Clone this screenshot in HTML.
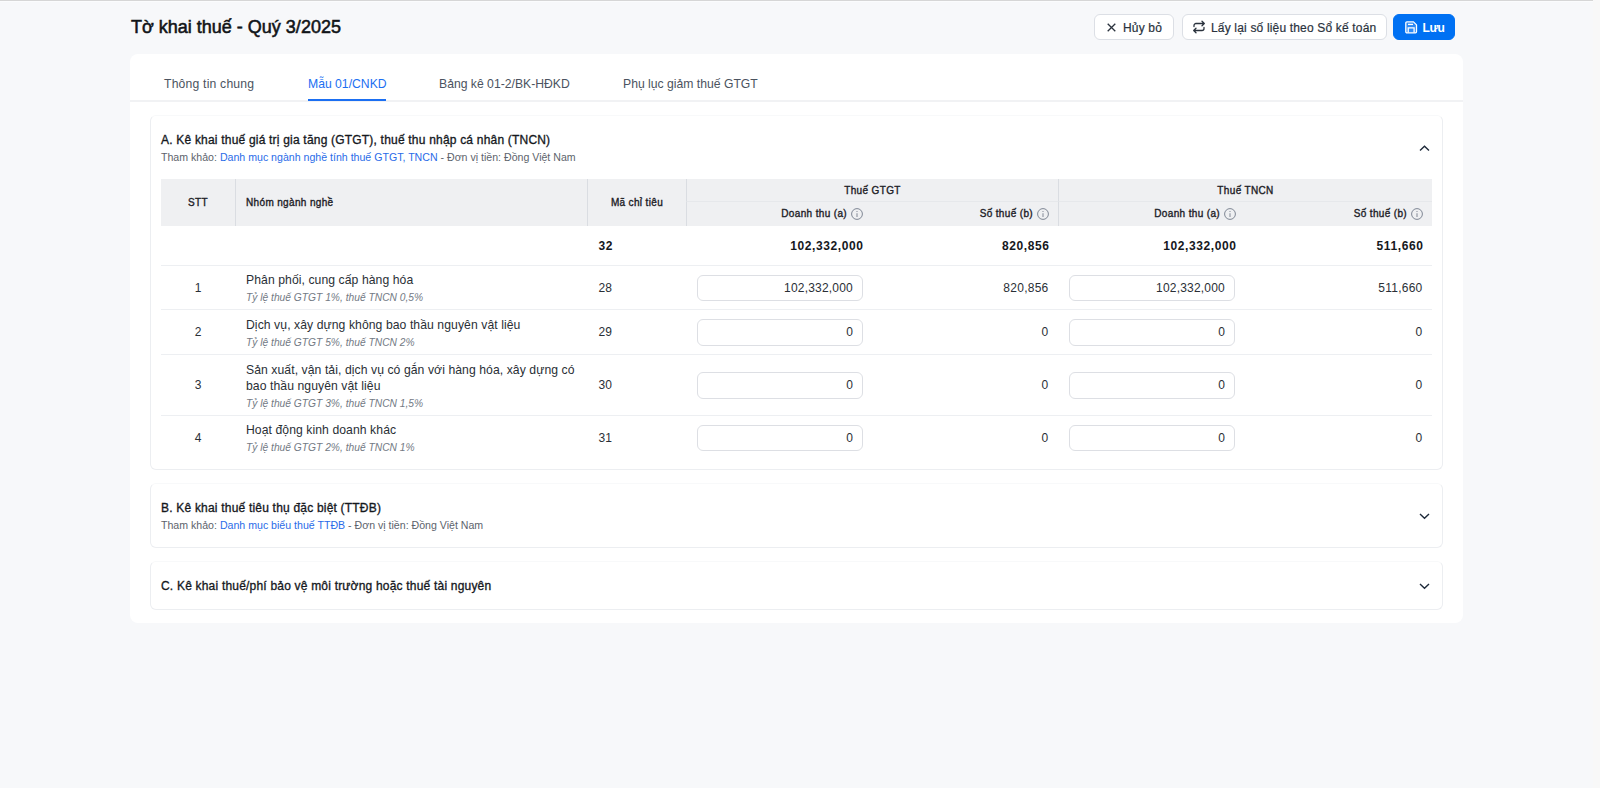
<!DOCTYPE html>
<html><head><meta charset="utf-8">
<style>
*{box-sizing:border-box;margin:0;padding:0}
html,body{width:1600px;height:788px;overflow:hidden}
body{background:#f7f8fa;font-family:"Liberation Sans",sans-serif;color:#1f2329;position:relative}
.topline{position:absolute;left:0;top:0;width:1593px;height:1px;background:#d6d6d6;box-shadow:0 1px 0 #fbfcfd}
.rstrip{position:absolute;left:1593px;top:0;width:7px;height:788px;background:#f8f8f8}
.title{position:absolute;left:131px;top:16px;font-size:18px;font-weight:normal;-webkit-text-stroke:0.55px currentColor;color:#111418;line-height:22px;white-space:nowrap}
.btn{position:absolute;top:14px;height:26px;border:1px solid #dcdfe5;border-radius:6px;background:#fff;font-size:12px;color:#2a323d;white-space:nowrap;line-height:24px}
.btn span{position:absolute;top:1px;letter-spacing:0.17px;-webkit-text-stroke:0.2px currentColor}
.btn svg{position:absolute}
.blue{background:#0071f3;border-color:#0071f3;color:#fff;font-weight:bold}
.card{position:absolute;left:130px;top:54px;width:1333px;height:569px;background:#fff;border-radius:8px}
.tabs{position:absolute;left:0;top:0;width:1333px;height:48px;border-bottom:2px solid #f1f2f4}
.tab{position:absolute;top:22px;font-size:12.2px;color:#4b5360;line-height:16px;white-space:nowrap}
.tab.act{color:#1b6ff2}
.uline{position:absolute;left:178px;top:45px;width:78px;height:2px;background:#1b6ff2}
.sec{position:absolute;left:20px;width:1293px;background:#fff;border:1px solid #eceef1;border-top-color:#f8f9fa;border-radius:6px}
.sh{position:absolute;left:10px;top:16px;white-space:nowrap}
.st{font-size:12px;font-weight:normal;-webkit-text-stroke:0.32px currentColor;letter-spacing:0.2px;color:#15181d;line-height:16px}
.ss{font-size:10.6px;color:#5d636c;line-height:14px;margin-top:2px}
.ss a{color:#2a6be8;text-decoration:none}
.chev{position:absolute;left:1268px}
table{position:absolute;left:10px;top:63px;width:1271px;border-collapse:separate;border-spacing:0;table-layout:fixed}
th{background:#eff0f2;font-size:10px;font-weight:normal;-webkit-text-stroke:0.35px currentColor;letter-spacing:0.35px;color:#1c2026;height:24px;padding:0 10px;white-space:nowrap}
th.g{height:23px;border-bottom:1px solid #e6e8eb;padding-top:1px}
th.l{border-left:1px solid #dadde2}
td{font-size:12px;color:#2a2f36;padding:0 10px;border-bottom:1px solid #edeff2;white-space:nowrap}
td.r,th.r{text-align:right}
th.r{padding-right:9px}
.tot td{font-weight:bold;color:#15181d;height:40px;letter-spacing:0.6px;padding-top:1px}
.name{line-height:16px;font-size:12.2px;letter-spacing:0.07px;color:#2a2f36;white-space:normal}
td.nm{padding:3px 10px 0 11px}
td.mc{padding-left:11.5px}
.it{font-style:italic;font-size:10.25px;color:#737a84;line-height:16px;margin-top:2px}
.inp{height:26.5px;width:166px;border:1px solid #dddfe4;border-radius:6px;text-align:right;padding-right:10px;line-height:25px;letter-spacing:0.2px;padding-right:9px}
td.ic{padding:1px 9px 0 11px}
.tot td.r{padding-right:8.5px}
td.v{padding-right:9.5px;letter-spacing:0.25px}
.info{display:inline-block;vertical-align:middle;margin-left:4px;position:relative;top:0px}
</style></head><body>
<div class="topline"></div>
<div class="rstrip"></div>
<div class="title">Tờ khai thuế - Quý 3/2025</div>

<div class="btn" style="left:1094px;width:80px">
  <svg style="left:12px;top:8px" width="9" height="9" viewBox="0 0 9 9"><path d="M0.7 0.7L8.3 8.3M8.3 0.7L0.7 8.3" stroke="#2a323d" stroke-width="1.3" fill="none"/></svg>
  <span style="left:28px">Hủy bỏ</span>
</div>
<div class="btn" style="left:1182px;width:205px">
  <svg style="left:9px;top:5px" width="14" height="14" viewBox="0 0 14 14"><path d="M2 6.5V5.5a2 2 0 0 1 2-2h8M10 1.2L12.3 3.5L10 5.8M12 7.5v1a2 2 0 0 1-2 2H2M4 8.2L1.7 10.5L4 12.8" stroke="#2a323d" stroke-width="1.3" fill="none" stroke-linecap="round" stroke-linejoin="round"/></svg>
  <span style="left:28px">Lấy lại số liệu theo Sổ kế toán</span>
</div>
<div class="btn blue" style="left:1393px;width:62px">
  <svg style="left:11px;top:6px" width="13" height="13" viewBox="0 0 13 13"><path d="M1.9 0.9h6.6l3 3v6.9a1.1 1.1 0 0 1-1.1 1.1H1.9a1.1 1.1 0 0 1-1.1-1.1V2a1.1 1.1 0 0 1 1.1-1.1z" stroke="#fff" stroke-width="1.3" fill="rgba(255,255,255,0.18)" stroke-linejoin="round"/><path d="M3 3.4h5" stroke="#fff" stroke-width="1.3"/><path d="M3.2 11.5V6.9h5.9v4.6" stroke="#fff" stroke-width="1.3" fill="none"/></svg>
  <span style="left:28.5px;font-size:12px;letter-spacing:-0.45px;-webkit-text-stroke:0">Lưu</span>
</div>

<div class="card">
  <div class="tabs">
    <div class="tab" style="left:34px;letter-spacing:0.19px">Thông tin chung</div>
    <div class="tab act" style="left:178px">Mẫu 01/CNKD</div>
    <div class="tab" style="left:309px">Bảng kê 01-2/BK-HĐKD</div>
    <div class="tab" style="left:493px">Phụ lục giảm thuế GTGT</div>
    <div class="uline"></div>
  </div>

  <div class="sec" style="top:61px;height:355px">
    <div class="sh">
      <div class="st">A. Kê khai thuế giá trị gia tăng (GTGT), thuế thu nhập cá nhân (TNCN)</div>
      <div class="ss">Tham khảo: <a>Danh mục ngành nghề tính thuế GTGT, TNCN</a> - Đơn vị tiền: Đồng Việt Nam</div>
    </div>
    <svg class="chev" style="top:28.5px" width="11" height="7" viewBox="0 0 11 7"><path d="M1 5.4L5.5 1.2L10 5.4" stroke="#1e2a3a" stroke-width="1.4" fill="none"/></svg>
    <table>
      <colgroup><col style="width:74px"><col style="width:352px"><col style="width:99px"><col style="width:186px"><col style="width:186px"><col style="width:187px"><col style="width:187px"></colgroup>
      <tr><th rowspan="2" style="text-align:center">STT</th><th rowspan="2" class="l" style="text-align:left">Nhóm ngành nghề</th><th rowspan="2" class="l" style="text-align:center">Mã chỉ tiêu</th><th colspan="2" class="l g">Thuế GTGT</th><th colspan="2" class="l g">Thuế TNCN</th></tr>
      <tr><th class="r l">Doanh thu (a)<svg class="info" width="12" height="12" viewBox="0 0 12 12"><circle cx="6" cy="6" r="5.4" stroke="#7f8794" stroke-width="1" fill="none"/><path d="M6 5.3v3.7M6 3.1v1" stroke="#8c939e" stroke-width="1.1"/></svg></th><th class="r">Số thuế (b)<svg class="info" width="12" height="12" viewBox="0 0 12 12"><circle cx="6" cy="6" r="5.4" stroke="#7f8794" stroke-width="1" fill="none"/><path d="M6 5.3v3.7M6 3.1v1" stroke="#8c939e" stroke-width="1.1"/></svg></th><th class="r l">Doanh thu (a)<svg class="info" width="12" height="12" viewBox="0 0 12 12"><circle cx="6" cy="6" r="5.4" stroke="#7f8794" stroke-width="1" fill="none"/><path d="M6 5.3v3.7M6 3.1v1" stroke="#8c939e" stroke-width="1.1"/></svg></th><th class="r">Số thuế (b)<svg class="info" width="12" height="12" viewBox="0 0 12 12"><circle cx="6" cy="6" r="5.4" stroke="#7f8794" stroke-width="1" fill="none"/><path d="M6 5.3v3.7M6 3.1v1" stroke="#8c939e" stroke-width="1.1"/></svg></th></tr>
      <tr class="tot"><td></td><td></td><td class="mc">32</td><td class="r">102,332,000</td><td class="r">820,856</td><td class="r">102,332,000</td><td class="r">511,660</td></tr>
      <tr style="height:44px"><td style="text-align:center">1</td><td class="nm"><div class="name">Phân phối, cung cấp hàng hóa</div><div class="it">Tỷ lệ thuế GTGT 1%, thuế TNCN 0,5%</div></td><td class="mc">28</td><td class="ic"><div class="inp">102,332,000</div></td><td class="r v">820,856</td><td class="ic"><div class="inp">102,332,000</div></td><td class="r v">511,660</td></tr>
      <tr style="height:45px"><td style="text-align:center">2</td><td class="nm"><div class="name">Dịch vụ, xây dựng không bao thầu nguyên vật liệu</div><div class="it">Tỷ lệ thuế GTGT 5%, thuế TNCN 2%</div></td><td class="mc">29</td><td class="ic"><div class="inp">0</div></td><td class="r v">0</td><td class="ic"><div class="inp">0</div></td><td class="r v">0</td></tr>
      <tr style="height:61px"><td style="text-align:center">3</td><td class="nm"><div class="name">Sản xuất, vận tải, dịch vụ có gắn với hàng hóa, xây dựng có bao thầu nguyên vật liệu</div><div class="it">Tỷ lệ thuế GTGT 3%, thuế TNCN 1,5%</div></td><td class="mc">30</td><td class="ic"><div class="inp">0</div></td><td class="r v">0</td><td class="ic"><div class="inp">0</div></td><td class="r v">0</td></tr>
      <tr style="height:43px"><td style="text-align:center;border:0">4</td><td class="nm" style="border:0"><div class="name">Hoạt động kinh doanh khác</div><div class="it">Tỷ lệ thuế GTGT 2%, thuế TNCN 1%</div></td><td class="mc" style="border:0">31</td><td class="ic" style="border:0"><div class="inp">0</div></td><td class="r v" style="border:0">0</td><td class="ic" style="border:0"><div class="inp">0</div></td><td class="r v" style="border:0">0</td></tr>
    </table>
  </div>

  <div class="sec" style="top:429px;height:65px">
    <div class="sh">
      <div class="st">B. Kê khai thuế tiêu thụ đặc biệt (TTĐB)</div>
      <div class="ss">Tham khảo: <a>Danh mục biểu thuế TTĐB</a> - Đơn vị tiền: Đồng Việt Nam</div>
    </div>
    <svg class="chev" style="top:29px" width="11" height="7" viewBox="0 0 11 7"><path d="M1 1.1L5.5 5.3L10 1.1" stroke="#1e2a3a" stroke-width="1.4" fill="none"/></svg>
  </div>

  <div class="sec" style="top:507px;height:49px">
    <div class="sh">
      <div class="st">C. Kê khai thuế/phí bảo vệ môi trường hoặc thuế tài nguyên</div>
    </div>
    <svg class="chev" style="top:21px" width="11" height="7" viewBox="0 0 11 7"><path d="M1 1.1L5.5 5.3L10 1.1" stroke="#1e2a3a" stroke-width="1.4" fill="none"/></svg>
  </div>
</div>
</body></html>
